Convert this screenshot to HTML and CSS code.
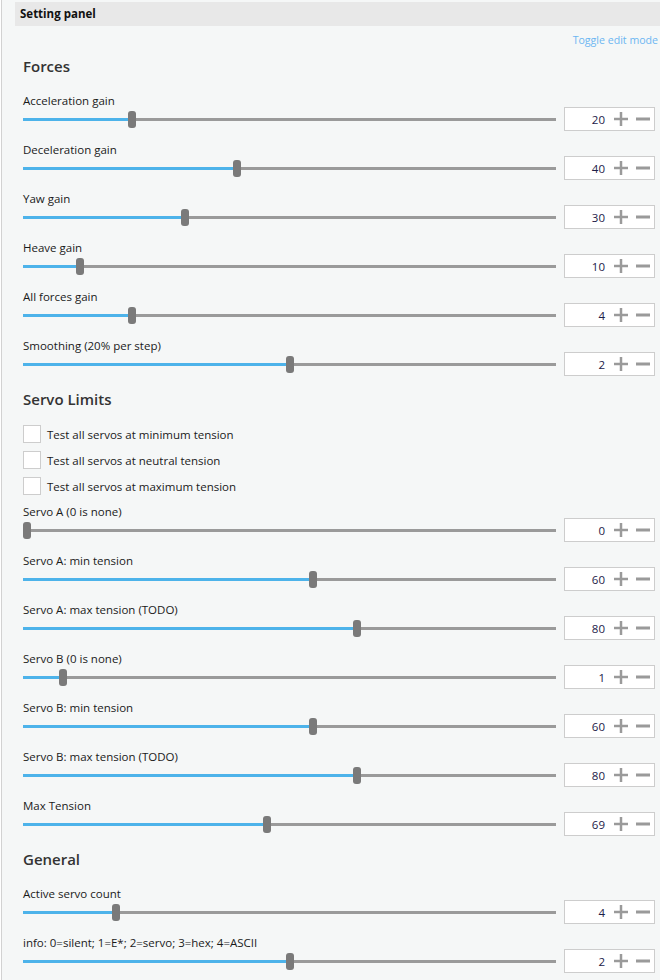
FILE: index.html
```html
<!DOCTYPE html>
<html>
<head>
<meta charset="utf-8">
<link rel="stylesheet" href="styles.css">
</head>
<body>
<div class="panel">
  <div class="header">Setting panel</div>
  <div class="toggle">Toggle edit mode</div>
  <div class="content">
    <h2 class="heading first">Forces</h2>
    <div class="field first">
      <div class="label">Acceleration gain</div>
      <div class="ctrl"><div class="slider" style="--p:0.2"><div class="track"></div><div class="fill"></div><div class="thumb"></div></div><div class="box"><span class="num">20</span><svg class="ic" viewBox="0 0 14 14"><rect x="0" y="5.75" width="14" height="2.5"/><rect x="5.75" y="0" width="2.5" height="14"/></svg><svg class="ic" viewBox="0 0 14 14"><rect x="0" y="5.5" width="14" height="3"/></svg></div></div>
    </div>
    <div class="field">
      <div class="label">Deceleration gain</div>
      <div class="ctrl"><div class="slider" style="--p:0.4"><div class="track"></div><div class="fill"></div><div class="thumb"></div></div><div class="box"><span class="num">40</span><svg class="ic" viewBox="0 0 14 14"><rect x="0" y="5.75" width="14" height="2.5"/><rect x="5.75" y="0" width="2.5" height="14"/></svg><svg class="ic" viewBox="0 0 14 14"><rect x="0" y="5.5" width="14" height="3"/></svg></div></div>
    </div>
    <div class="field">
      <div class="label">Yaw gain</div>
      <div class="ctrl"><div class="slider" style="--p:0.3"><div class="track"></div><div class="fill"></div><div class="thumb"></div></div><div class="box"><span class="num">30</span><svg class="ic" viewBox="0 0 14 14"><rect x="0" y="5.75" width="14" height="2.5"/><rect x="5.75" y="0" width="2.5" height="14"/></svg><svg class="ic" viewBox="0 0 14 14"><rect x="0" y="5.5" width="14" height="3"/></svg></div></div>
    </div>
    <div class="field">
      <div class="label">Heave gain</div>
      <div class="ctrl"><div class="slider" style="--p:0.1"><div class="track"></div><div class="fill"></div><div class="thumb"></div></div><div class="box"><span class="num">10</span><svg class="ic" viewBox="0 0 14 14"><rect x="0" y="5.75" width="14" height="2.5"/><rect x="5.75" y="0" width="2.5" height="14"/></svg><svg class="ic" viewBox="0 0 14 14"><rect x="0" y="5.5" width="14" height="3"/></svg></div></div>
    </div>
    <div class="field">
      <div class="label">All forces gain</div>
      <div class="ctrl"><div class="slider" style="--p:0.2"><div class="track"></div><div class="fill"></div><div class="thumb"></div></div><div class="box"><span class="num">4</span><svg class="ic" viewBox="0 0 14 14"><rect x="0" y="5.75" width="14" height="2.5"/><rect x="5.75" y="0" width="2.5" height="14"/></svg><svg class="ic" viewBox="0 0 14 14"><rect x="0" y="5.5" width="14" height="3"/></svg></div></div>
    </div>
    <div class="field">
      <div class="label">Smoothing (20% per step)</div>
      <div class="ctrl"><div class="slider" style="--p:0.5"><div class="track"></div><div class="fill"></div><div class="thumb"></div></div><div class="box"><span class="num">2</span><svg class="ic" viewBox="0 0 14 14"><rect x="0" y="5.75" width="14" height="2.5"/><rect x="5.75" y="0" width="2.5" height="14"/></svg><svg class="ic" viewBox="0 0 14 14"><rect x="0" y="5.5" width="14" height="3"/></svg></div></div>
    </div>

    <h2 class="heading">Servo Limits</h2>
    <div class="checks">
      <label class="check"><span class="cb"></span>Test all servos at minimum tension</label>
      <label class="check"><span class="cb"></span>Test all servos at neutral tension</label>
      <label class="check"><span class="cb"></span>Test all servos at maximum tension</label>
    </div>
    <div class="field after-checks">
      <div class="label">Servo A (0 is none)</div>
      <div class="ctrl"><div class="slider" style="--p:0"><div class="track"></div><div class="fill"></div><div class="thumb"></div></div><div class="box"><span class="num">0</span><svg class="ic" viewBox="0 0 14 14"><rect x="0" y="5.75" width="14" height="2.5"/><rect x="5.75" y="0" width="2.5" height="14"/></svg><svg class="ic" viewBox="0 0 14 14"><rect x="0" y="5.5" width="14" height="3"/></svg></div></div>
    </div>
    <div class="field">
      <div class="label">Servo A: min tension</div>
      <div class="ctrl"><div class="slider" style="--p:0.545"><div class="track"></div><div class="fill"></div><div class="thumb"></div></div><div class="box"><span class="num">60</span><svg class="ic" viewBox="0 0 14 14"><rect x="0" y="5.75" width="14" height="2.5"/><rect x="5.75" y="0" width="2.5" height="14"/></svg><svg class="ic" viewBox="0 0 14 14"><rect x="0" y="5.5" width="14" height="3"/></svg></div></div>
    </div>
    <div class="field">
      <div class="label">Servo A: max tension (TODO)</div>
      <div class="ctrl"><div class="slider" style="--p:0.629"><div class="track"></div><div class="fill"></div><div class="thumb"></div></div><div class="box"><span class="num">80</span><svg class="ic" viewBox="0 0 14 14"><rect x="0" y="5.75" width="14" height="2.5"/><rect x="5.75" y="0" width="2.5" height="14"/></svg><svg class="ic" viewBox="0 0 14 14"><rect x="0" y="5.5" width="14" height="3"/></svg></div></div>
    </div>
    <div class="field">
      <div class="label">Servo B (0 is none)</div>
      <div class="ctrl"><div class="slider" style="--p:0.069"><div class="track"></div><div class="fill"></div><div class="thumb"></div></div><div class="box"><span class="num">1</span><svg class="ic" viewBox="0 0 14 14"><rect x="0" y="5.75" width="14" height="2.5"/><rect x="5.75" y="0" width="2.5" height="14"/></svg><svg class="ic" viewBox="0 0 14 14"><rect x="0" y="5.5" width="14" height="3"/></svg></div></div>
    </div>
    <div class="field">
      <div class="label">Servo B: min tension</div>
      <div class="ctrl"><div class="slider" style="--p:0.545"><div class="track"></div><div class="fill"></div><div class="thumb"></div></div><div class="box"><span class="num">60</span><svg class="ic" viewBox="0 0 14 14"><rect x="0" y="5.75" width="14" height="2.5"/><rect x="5.75" y="0" width="2.5" height="14"/></svg><svg class="ic" viewBox="0 0 14 14"><rect x="0" y="5.5" width="14" height="3"/></svg></div></div>
    </div>
    <div class="field">
      <div class="label">Servo B: max tension (TODO)</div>
      <div class="ctrl"><div class="slider" style="--p:0.629"><div class="track"></div><div class="fill"></div><div class="thumb"></div></div><div class="box"><span class="num">80</span><svg class="ic" viewBox="0 0 14 14"><rect x="0" y="5.75" width="14" height="2.5"/><rect x="5.75" y="0" width="2.5" height="14"/></svg><svg class="ic" viewBox="0 0 14 14"><rect x="0" y="5.5" width="14" height="3"/></svg></div></div>
    </div>
    <div class="field">
      <div class="label">Max Tension</div>
      <div class="ctrl"><div class="slider" style="--p:0.457"><div class="track"></div><div class="fill"></div><div class="thumb"></div></div><div class="box"><span class="num">69</span><svg class="ic" viewBox="0 0 14 14"><rect x="0" y="5.75" width="14" height="2.5"/><rect x="5.75" y="0" width="2.5" height="14"/></svg><svg class="ic" viewBox="0 0 14 14"><rect x="0" y="5.5" width="14" height="3"/></svg></div></div>
    </div>

    <h2 class="heading">General</h2>
    <div class="field first">
      <div class="label">Active servo count</div>
      <div class="ctrl"><div class="slider" style="--p:0.17"><div class="track"></div><div class="fill"></div><div class="thumb"></div></div><div class="box"><span class="num">4</span><svg class="ic" viewBox="0 0 14 14"><rect x="0" y="5.75" width="14" height="2.5"/><rect x="5.75" y="0" width="2.5" height="14"/></svg><svg class="ic" viewBox="0 0 14 14"><rect x="0" y="5.5" width="14" height="3"/></svg></div></div>
    </div>
    <div class="field">
      <div class="label">info: 0=silent; 1=E*; 2=servo; 3=hex; 4=ASCII</div>
      <div class="ctrl"><div class="slider" style="--p:0.5"><div class="track"></div><div class="fill"></div><div class="thumb"></div></div><div class="box"><span class="num">2</span><svg class="ic" viewBox="0 0 14 14"><rect x="0" y="5.75" width="14" height="2.5"/><rect x="5.75" y="0" width="2.5" height="14"/></svg><svg class="ic" viewBox="0 0 14 14"><rect x="0" y="5.5" width="14" height="3"/></svg></div></div>
    </div>
  </div>
</div>
</body>
</html>
```
FILE: styles.css
```css
* { box-sizing: border-box; }
html, body { margin: 0; padding: 0; background: #ffffff; }
body {
  font-family: "Open Sans", "Noto Sans", sans-serif;
  font-size: 11.5px;
  color: #1a1a1a;
  height: 980px;
  overflow: hidden;
}
.panel {
  margin-left: 1px;
  border-left: 1px solid #d2d2d2;
  background: #f5f7f7;
  height: 980px;
  padding-top: 2px;
}
.header {
  margin-left: 13px;
  height: 24px;
  line-height: 24px;
  background: #e8e8e8;
  padding-left: 5px;
  font-weight: 700;
  font-size: 11.5px;
  color: #111;
}
.toggle {
  margin-top: 7px;
  height: 14px;
  line-height: 14px;
  text-align: right;
  font-size: 10.6px;
  color: #6cb6f2;
  padding-right: 2px;
}
.content {
  padding: 0 5px 0 21px;
}
.heading {
  margin: 13px 0 0 0;
  font-size: 15px;
  font-weight: 600;
  line-height: 20px;
  height: 20px;
  color: #333;
}
.heading.first { margin-top: 9px; }
.field { margin-top: 11px; }
.field.first { margin-top: 17px; }
.field.after-checks { margin-top: 9px; }
.label {
  height: 14px;
  line-height: 16px;
  white-space: nowrap;
}
.ctrl {
  display: flex;
  align-items: center;
  gap: 8px;
  height: 24px;
}
.slider {
  flex: 1;
  position: relative;
  height: 17px;
  display: flex;
  align-items: center;
}
.track {
  width: 100%;
  height: 3px;
  background: #9a9a9a;
}
.fill {
  position: absolute;
  left: 0;
  top: 7px;
  height: 3px;
  width: calc(var(--p) * (100% - 8px) + 4px);
  background: #4db3ea;
}
.thumb {
  position: absolute;
  top: 0;
  left: calc(var(--p) * (100% - 8px));
  width: 8px;
  height: 17px;
  border-radius: 3px;
  background: #7a7a7a;
}
.box {
  width: 91px;
  height: 24px;
  background: #fff;
  border: 1px solid #cdcdcd;
  display: flex;
  align-items: center;
  padding-right: 4px;
}
.num {
  flex: 1;
  text-align: right;
  padding-right: 9px;
  color: #1c2048;
  font-size: 11.5px;
}
.ic {
  width: 14px;
  height: 14px;
  fill: #9a9a9a;
  display: block;
}
.ic + .ic { margin-left: 8px; }
.checks {
  margin-top: 16px;
  display: flex;
  flex-direction: column;
  gap: 8px;
}
.check {
  display: flex;
  align-items: center;
  height: 18px;
  gap: 6px;
}
.cb {
  width: 18px;
  height: 18px;
  background: #fff;
  border: 1px solid #cdcdcd;
  display: block;
}
```
